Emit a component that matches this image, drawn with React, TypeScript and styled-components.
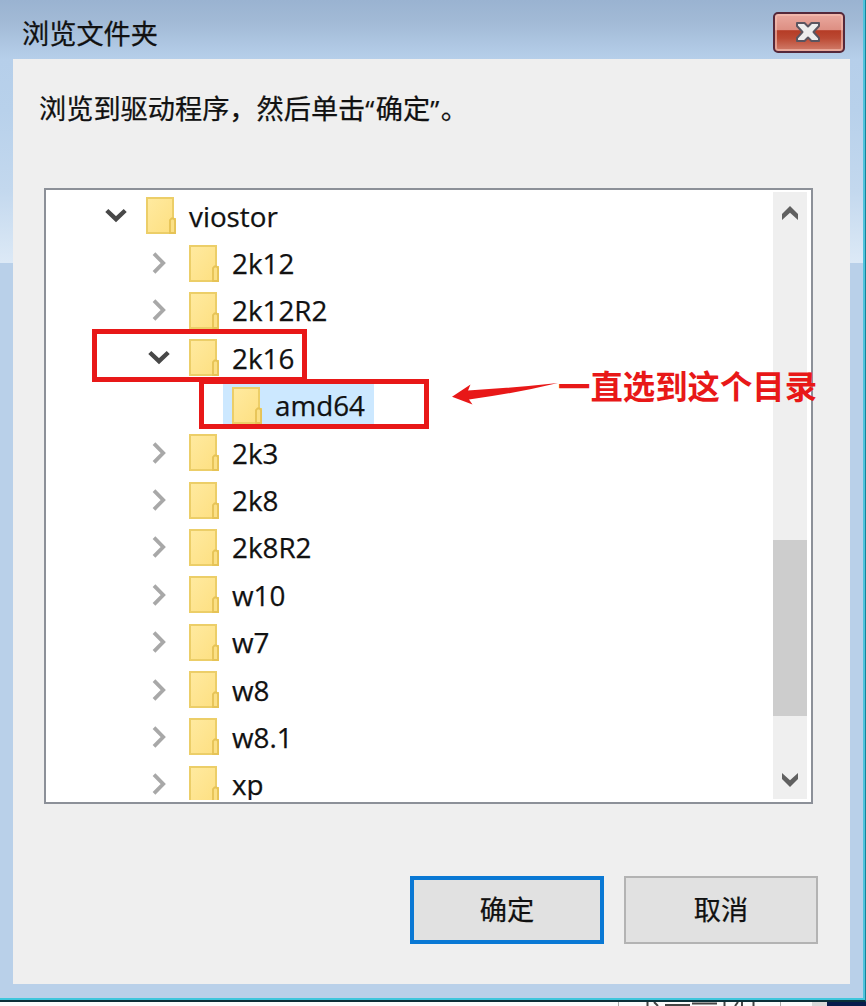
import React from "react";
import styled, { createGlobalStyle } from "styled-components";

const Global = createGlobalStyle`
  * { box-sizing: border-box; }
  html, body { margin: 0; padding: 0; }
  body {
    width: 866px;
    height: 1006px;
    overflow: hidden;
    background: #fff;
    font-family: "Open Sans", "Noto Sans CJK SC", sans-serif;
    color: #111;
    -webkit-text-stroke: 0.25px currentColor;
  }
`;

const Desktop = styled.div`
  width: 866px;
  height: 1006px;
  overflow: hidden;
  display: flex;
  flex-direction: column;
`;

const Frame = styled.div`
  height: 1002px;
  flex: none;
  display: flex;
  flex-direction: column;
  border-right: 1px solid #17849a;
  border-bottom: 2px solid #0b3038;
`;

const Glass = styled.div`
  flex: 1;
  display: flex;
  flex-direction: column;
  padding: 0 13px 14px 13px;
  border-right: 2px solid #4fc3dc;
  border-bottom: 2px solid #3fc6dc;
  background:
    linear-gradient(#b9d0e9, #b9d0e9) 0 263px / 100% 740px no-repeat,
    linear-gradient(#9ab3d1 0, #a2bad6 22px, #b6cfea 59px, #b8d1eb 110px, #c3d8ee 190px, #dce9f6 262px);
`;

const TitleBar = styled.header`
  height: 59px;
  flex: none;
  display: flex;
  justify-content: space-between;
  padding: 12px 5px 0 9px;
`;

const Title = styled.h1`
  margin: 0;
  font-size: 27.2px;
  line-height: 40px;
  font-weight: 400;
  font-family: "Noto Sans CJK SC", sans-serif;
`;

const CloseButton = styled.button`
  width: 72px;
  height: 41px;
  padding: 0 2px 2px 0;
  display: grid;
  place-items: center;
  border: 2px solid #55283a;
  border-radius: 5px;
  box-shadow: inset 0 0 0 2px rgba(244, 190, 178, 0.65);
  background: linear-gradient(#eaa99f 0, #dd8f83 43%, #b53c26 45%, #bb4933 65%, #d27e6c 100%);
`;

const Client = styled.main`
  flex: 1;
  display: flex;
  flex-direction: column;
  align-items: flex-start;
  background: #efefef;
  padding: 28px 32px 40px 26px;
`;

const Message = styled.p`
  margin: 0 0 61px 0;
  height: 40px;
  font-size: 27.2px;
  line-height: 40px;
  white-space: nowrap;
  font-family: "Noto Sans CJK SC", sans-serif;
`;

const Quote = styled.span`
  display: inline-block;
  width: 10.5px;
  font-family: "Open Sans", sans-serif;
  font-size: 26px;
`;

const TreeBox = styled.section`
  position: relative;
  width: 769px;
  height: 616px;
  margin-left: 5px;
  flex: none;
  display: flex;
  background: #fff;
  border: 2px solid #8c9098;
  padding: 2px 4px 2px 2px;
`;

const Tree = styled.ul`
  list-style: none;
  flex: 1;
  margin: 0;
  padding: 0;
  height: 608px;
  overflow: hidden;
`;

const Row = styled.li<{ $level: number }>`
  height: 47.4px;
  display: flex;
  align-items: center;
  padding-left: ${(p) => 53 + p.$level * 43}px;
`;

const Toggle = styled.span`
  width: 30px;
  height: 30px;
  display: grid;
  place-items: center;
  margin-right: 6px;
`;

const Item = styled.span<{ $selected?: boolean }>`
  height: 47.4px;
  display: flex;
  align-items: center;
  padding: 0 7px 0 9px;
  background: ${(p) => (p.$selected ? "#cce8ff" : "transparent")};
`;

const Label = styled.span<{ $width: number }>`
  width: ${(p) => p.$width}px;
  margin-left: 13px;
  font-size: 27.8px;
  line-height: 26px;
  white-space: nowrap;
`;

const ScrollBar = styled.div`
  width: 34px;
  height: 607px;
  background: #efefef;
  display: flex;
  flex-direction: column;
  align-items: center;
  justify-content: space-between;
  padding: 13px 0 11px;
`;

const Thumb = styled.div`
  width: 34px;
  height: 176px;
  margin: auto 0 56px;
  background: #cdcdcd;
`;

const Buttons = styled.div`
  align-self: flex-end;
  display: flex;
  gap: 20px;
  margin-top: 72px;
`;

const PushButton = styled.button<{ $primary?: boolean }>`
  width: 194px;
  height: 68px;
  padding: 0 0 4px;
  border: ${(p) => (p.$primary ? "4px solid #0a78d4" : "2px solid #b3b3b3")};
  background: #e1e1e1;
  color: #111;
  font-size: 27.2px;
  line-height: 40px;
  font-family: "Noto Sans CJK SC", sans-serif;
  -webkit-text-stroke: 0.25px currentColor;
`;

const Highlight = styled.div<{ $x: number; $y: number; $w: number; $h: number }>`
  position: absolute;
  left: ${(p) => p.$x}px;
  top: ${(p) => p.$y}px;
  width: ${(p) => p.$w}px;
  height: ${(p) => p.$h}px;
  border: 5px solid #e81818;
`;

const Note = styled.div`
  position: absolute;
  left: 406px;
  top: 171px;
  display: flex;
  align-items: flex-start;
  height: 48px;
  color: #e81818;
  white-space: nowrap;
  font: 700 32.4px/48px "Noto Sans CJK SC", sans-serif;
  -webkit-text-stroke: 0;

  svg {
    margin-top: 22px;
    flex: none;
  }
`;

const Backdrop = styled.div`
  height: 4px;
  display: flex;
  background: #fafafa;
  svg { display: block; }
`;

const FolderIcon = () => (
  <svg width="30" height="37" viewBox="0 0 30 37">
    <defs>
      <linearGradient id="paper" x1="0" y1="0" x2="1" y2="1">
        <stop offset="0" stopColor="#ffeaa0" />
        <stop offset="1" stopColor="#fddf80" />
      </linearGradient>
    </defs>
    <path d="M1 1H27V22H29V36H1Z" fill="url(#paper)" stroke="#ecce68" strokeWidth="2" />
    <path d="M24 36V23L25.500 21.500H27.500L29 23V36Z" fill="#fbe086" stroke="#e6c356" strokeWidth="1.8" />
  </svg>
);

const Chevron = ({ open }: { open?: boolean }) =>
  open ? (
    <svg width="22" height="16" viewBox="0 0 22 16">
      <path d="M1.8 2.5L11 11.2L20.2 2.5" fill="none" stroke="#484848" strokeWidth="4.4" />
    </svg>
  ) : (
    <svg width="16" height="22" viewBox="0 0 16 22">
      <path d="M3 1.7L12.2 11L3 20.3" fill="none" stroke="#a8a8a8" strokeWidth="3.8" />
    </svg>
  );

const Arrow = ({ down }: { down?: boolean }) => (
  <svg width="18" height="16" viewBox="0 0 18 16">
    <path
      d={down ? "M1 1L9 8.2L17 1V7L9 15L1 7Z" : "M1 15L9 7.8L17 15V9L9 1L1 9Z"}
      fill="#606060"
    />
  </svg>
);

type Node = { name: string; level: number; width: number; open?: boolean; leaf?: boolean; selected?: boolean };

const nodes: Node[] = [
  { name: "viostor", level: 0, width: 91, open: true },
  { name: "2k12", level: 1, width: 64 },
  { name: "2k12R2", level: 1, width: 98 },
  { name: "2k16", level: 1, width: 64, open: true },
  { name: "amd64", level: 2, width: 92, leaf: true, selected: true },
  { name: "2k3", level: 1, width: 48 },
  { name: "2k8", level: 1, width: 48 },
  { name: "2k8R2", level: 1, width: 82 },
  { name: "w10", level: 1, width: 52 },
  { name: "w7", level: 1, width: 36 },
  { name: "w8", level: 1, width: 36 },
  { name: "w8.1", level: 1, width: 56 },
  { name: "xp", level: 1, width: 32 },
];

export default function App() {
  return (
    <Desktop>
      <Global />
      <Frame>
        <Glass>
          <TitleBar>
            <Title>浏览文件夹</Title>
            <CloseButton aria-label="关闭">
              <svg width="26" height="22" viewBox="0 0 26 22">
                <path
                  d="M2 2H9.500L13 5.500L16.500 2H24V5L18.500 11L24 17V20H16.500L13 16.500L9.500 20H2V17L7.500 11L2 5Z"
                  fill="#ededed"
                  stroke="#5a5560"
                  strokeWidth="2"
                  strokeLinejoin="round"
                />
              </svg>
            </CloseButton>
          </TitleBar>
          <Client>
            <Message>
              浏览到驱动程序，然后单击<Quote>“</Quote>确定<Quote>”</Quote>。
            </Message>
            <TreeBox>
              <Tree>
                {nodes.map((n) => (
                  <Row key={n.name} $level={n.level}>
                    <Toggle>{!n.leaf && <Chevron open={n.open} />}</Toggle>
                    <Item $selected={n.selected}>
                      <FolderIcon />
                      <Label $width={n.width}>{n.name}</Label>
                    </Item>
                  </Row>
                ))}
              </Tree>
              <ScrollBar>
                <Arrow />
                <Thumb />
                <Arrow down />
              </ScrollBar>
              <Highlight $x={46} $y={139} $w={215} $h={53} />
              <Highlight $x={153} $y={189} $w={230} $h={50} />
              <Note>
                <svg width="106" height="24" viewBox="0 0 106 24">
                  <path d="M0 13.7L18.5 1.5L16 7.500Q60 5 106 0Q65 10 17 16.500L20.5 21.500Z" fill="#e81818" />
                </svg>
                一直选到这个目录
              </Note>
            </TreeBox>
            <Buttons>
              <PushButton $primary>确定</PushButton>
              <PushButton>取消</PushButton>
            </Buttons>
          </Client>
        </Glass>
      </Frame>
      <Backdrop>
        <svg width="866" height="4" viewBox="0 0 866 4">
          <rect x="827" width="39" height="4" fill="#071c4c" />
          <rect x="812" width="15" height="4" fill="#d8d8d8" />
          <path d="M618.500 0V4M780.500 0V4" stroke="#aaa" />
          <path d="M647.500 0V4M724.500 0V4M753.500 0V4M654 0L658 4M665 3H690M692 1.500H717M735 4L738 0M742 0V4" stroke="#444" strokeWidth="2" />
        </svg>
      </Backdrop>
    </Desktop>
  );
}
